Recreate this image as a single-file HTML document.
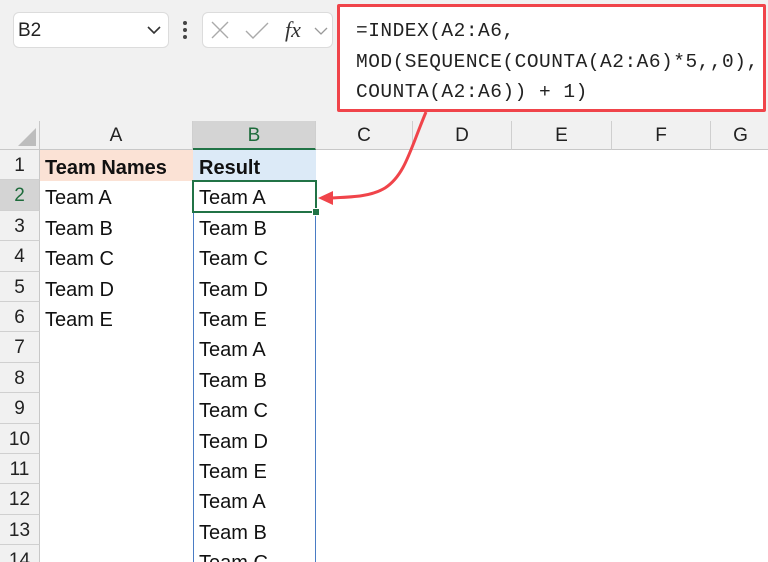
<!DOCTYPE html>
<html><head><style>
*{margin:0;padding:0;box-sizing:border-box}
html,body{width:768px;height:562px;overflow:hidden}
body{background:#fff;position:relative;font-family:"Liberation Sans",sans-serif}
.abs{position:absolute}
.top{left:0;top:0;width:768px;height:121px;background:#f1f1f1}
.box{background:#fff;border:1px solid #dcdcdc;border-radius:6px}
.mono{font-family:"Liberation Mono",monospace;font-size:19.5px;letter-spacing:0.5px;color:#222;line-height:30.5px;white-space:nowrap}
.ch{top:121px;height:29px;background:#f1f1f1;border-right:1px solid #cfcfcf;border-bottom:1px solid #c8c8c8;text-align:center;font-size:19px;line-height:30px;color:#222}
.rh{left:0;width:40px;height:30.4px;background:#f1f1f1;border-right:1px solid #c8c8c8;border-bottom:1px solid #d0d0d0;text-align:center;font-size:19px;line-height:32px;color:#222}
.c{font-size:20px;line-height:30px;color:#111;height:30.4px}
</style></head><body>
<div class="abs top"></div>
<div class="abs box" style="left:13px;top:12px;width:156px;height:36px;"></div>
<div class="abs" style="left:18px;top:20px;font-size:19px;color:#222">B2</div>
<svg class="abs" style="left:146px;top:24px" width="16" height="12"><path d="M2 3 L8 9 L14 3" stroke="#333" stroke-width="1.6" fill="none"/></svg>
<div class="abs" style="left:183px;top:21px;width:4px;height:4px;border-radius:2px;background:#444"></div>
<div class="abs" style="left:183px;top:28px;width:4px;height:4px;border-radius:2px;background:#444"></div>
<div class="abs" style="left:183px;top:35px;width:4px;height:4px;border-radius:2px;background:#444"></div>
<div class="abs box" style="left:202px;top:12px;width:131px;height:36px;"></div>
<svg class="abs" style="left:208px;top:18px" width="124" height="26"><path d="M4 4 L20 20 M20 4 L4 20" stroke="#aaa" stroke-width="1.4" fill="none"/><path d="M38 13 L45 20 L60 5" stroke="#aaa" stroke-width="1.4" fill="none"/><text x="77" y="19" font-family="Liberation Serif" font-style="italic" font-size="22" fill="#333">fx</text><path d="M107 10 L113 16 L119 10" stroke="#999" stroke-width="1.3" fill="none"/></svg>
<div class="abs" style="left:337px;top:4px;width:429px;height:108px;border:3px solid #f0444a;background:#fff;border-radius:2px"></div>
<div class="abs mono" style="left:356px;top:16px">=INDEX(A2:A6,<br>MOD(SEQUENCE(COUNTA(A2:A6)*5,,0),<br>COUNTA(A2:A6)) + 1)</div>
<div class="abs" style="left:0;top:121px;width:40px;height:29px;background:#f1f1f1;border-right:1px solid #c8c8c8;border-bottom:1px solid #c8c8c8"></div>
<svg class="abs" style="left:16px;top:128px" width="20" height="20"><path d="M20 0 L20 18 L2 18 Z" fill="#bdbdbd"/></svg>
<div class="abs ch" style="left:40px;width:153px">A</div>
<div class="abs ch" style="left:193px;width:123px;background:#d4d4d4;color:#1d6b3b;border-bottom:2px solid #217346">B</div>
<div class="abs ch" style="left:316px;width:97px">C</div>
<div class="abs ch" style="left:413px;width:99px">D</div>
<div class="abs ch" style="left:512px;width:100px">E</div>
<div class="abs ch" style="left:612px;width:99px">F</div>
<div class="abs ch" style="left:711px;width:60px">G</div>
<div class="abs" style="left:40px;top:150px;width:153px;height:31px;background:#fbe2d5"></div>
<div class="abs" style="left:193px;top:150px;width:123px;height:31px;background:#dceaf7"></div>
<div class="abs" style="left:193px;top:181px;width:123px;height:390px;border-left:1.5px solid #4a7cc4;border-right:1.5px solid #4a7cc4"></div>
<div class="abs" style="left:192px;top:180px;width:125px;height:33px;border:2.5px solid #217346"></div>
<div class="abs" style="left:312px;top:208px;width:8px;height:8px;background:#217346;border:1px solid #fff"></div>
<div class="abs" style="left:0;top:182px;width:3px;height:30px;background:#217346"></div>
<div class="abs rh" style="top:150px">1</div>
<div class="abs rh" style="top:180.4px;background:#d4d4d4;color:#1d6b3b">2</div>
<div class="abs rh" style="top:210.8px">3</div>
<div class="abs rh" style="top:241.2px">4</div>
<div class="abs rh" style="top:271.6px">5</div>
<div class="abs rh" style="top:302px">6</div>
<div class="abs rh" style="top:332.4px">7</div>
<div class="abs rh" style="top:362.8px">8</div>
<div class="abs rh" style="top:393.2px">9</div>
<div class="abs rh" style="top:423.6px">10</div>
<div class="abs rh" style="top:454px">11</div>
<div class="abs rh" style="top:484.4px">12</div>
<div class="abs rh" style="top:514.8px">13</div>
<div class="abs rh" style="top:545.2px">14</div>
<div class="abs c" style="left:45px;top:153px;font-weight:bold">Team Names</div>
<div class="abs c" style="left:199px;top:153px;font-weight:bold">Result</div>
<div class="abs c" style="left:45px;top:183.4px">Team A</div>
<div class="abs c" style="left:45px;top:213.8px">Team B</div>
<div class="abs c" style="left:45px;top:244.2px">Team C</div>
<div class="abs c" style="left:45px;top:274.6px">Team D</div>
<div class="abs c" style="left:45px;top:305px">Team E</div>
<div class="abs c" style="left:199px;top:183.4px">Team A</div>
<div class="abs c" style="left:199px;top:213.8px">Team B</div>
<div class="abs c" style="left:199px;top:244.2px">Team C</div>
<div class="abs c" style="left:199px;top:274.6px">Team D</div>
<div class="abs c" style="left:199px;top:305px">Team E</div>
<div class="abs c" style="left:199px;top:335.4px">Team A</div>
<div class="abs c" style="left:199px;top:365.8px">Team B</div>
<div class="abs c" style="left:199px;top:396.2px">Team C</div>
<div class="abs c" style="left:199px;top:426.6px">Team D</div>
<div class="abs c" style="left:199px;top:457px">Team E</div>
<div class="abs c" style="left:199px;top:487.4px">Team A</div>
<div class="abs c" style="left:199px;top:517.8px">Team B</div>
<div class="abs c" style="left:199px;top:548.2px">Team C</div>
<svg class="abs" style="left:0;top:0" width="768" height="562"><path d="M426 112 C410 150 405 175 385 188 C370 197 350 197 330 198" stroke="#f0444a" stroke-width="3" fill="none"/><path d="M318 198 L333 191 L333 205 Z" fill="#f0444a"/></svg>
</body></html>
